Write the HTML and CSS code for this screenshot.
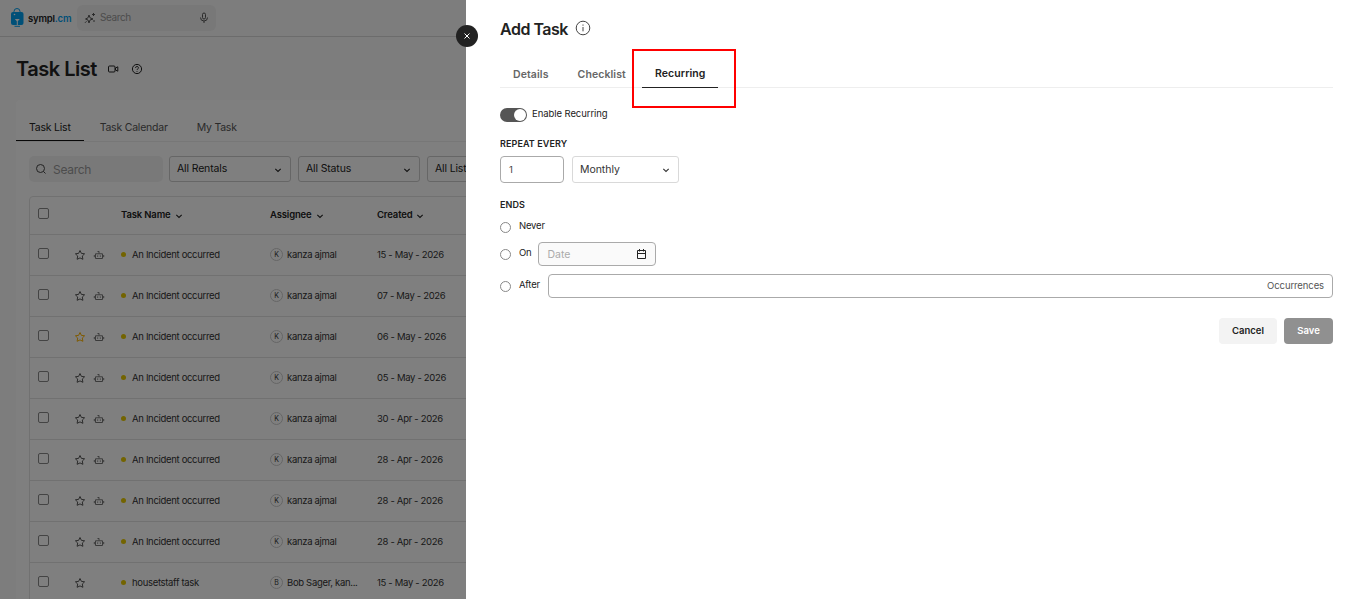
FILE: index.html
```
<!DOCTYPE html>
<html lang="en">
<head>
    <meta charset="UTF-8">
    <title>Task List</title>
    <link rel="stylesheet" href="styles.css">
</head>
<body>
<svg class="sprite">
    <symbol id="chevron" viewBox="0 0 10 10"><path d="M2.300 3.800L5 6.400l2.700-2.600"/></symbol>
    <symbol id="star" viewBox="0 0 12 12"><path d="M6 1.500l1.400 2.900 3.200.4-2.300 2.200.6 3.300L6 8.900l-2.900 1.400.6-3.300L1.400 4.800l3.200-.4z"/></symbol>
    <symbol id="robot" viewBox="0 0 12 12"><path d="M2.500 4.800h7v4.700h-7zM6 4.500V2.300M4.500 2.500H6M1.300 6v2.200M10.700 6v2.200M4.700 6.400v1.400M7.300 6.400v1.400"/></symbol>
</svg>

<div class="page">
    <div class="topbar">
        <svg class="logo-icon" viewBox="0 0 14 20">
            <path class="handle" d="M4 5V3.500a3 3 0 0 1 6 0V5"/>
            <rect x="1" y="4" width="12.500" height="13" rx="2"/>
            <path class="glass" d="M4.800 11h5L7.300 13.800zM6.800 13h1v4h-1z"/>
            <path d="M4.500 18.800h5.500v-1H4.500z"/>
            <circle class="glass" cx="4.500" cy="6.500" r=".8"/>
        </svg>
        <div class="logo-text">sympl<span>.cm</span></div>
        <div class="top-search">
            <svg class="icon" width="12" height="12" viewBox="0 0 12 12"><path d="M5 3l1 2.800L9 7 6 8 5 11 4 8 1.500 7 4 5.800zM9.500 1v3M8 2.500h3M10 8v2M1 10.800l1.500-1.500"/></svg>
            <span>Search</span>
            <svg class="icon" width="10" height="12" viewBox="0 0 10 12"><rect x="3.500" y="1" width="3" height="6" rx="1.500"/><path d="M1.500 5.500a3.500 3.500 0 0 0 7 0M5 9v2"/></svg>
        </div>
    </div>

    <div class="title">
        <h1>Task List</h1>
        <svg class="icon video" width="12" height="10" viewBox="0 0 12 10"><rect x="1.500" y="2" width="6.500" height="6" rx="1"/><path d="M8.500 4l2.300-1.200v4.400L8.500 6z"/></svg>
        <svg class="icon" width="12" height="12" viewBox="0 0 12 12"><circle cx="6" cy="6" r="4.600"/><path d="M4.600 4.900a1.400 1.400 0 1 1 2 1.200Q6 6.400 6 7M6 8v.8"/></svg>
    </div>

    <div class="card">
        <ul class="tabs">
            <li class="select">Task List</li>
            <li>Task Calendar</li>
            <li>My Task</li>
        </ul>
        <div class="filters">
            <div class="search">
                <svg class="icon" width="12" height="12" viewBox="0 0 12 12"><circle cx="5.500" cy="5.500" r="4"/><path d="M8.500 8.500l2 2"/></svg>
                <span>Search</span>
            </div>
            <div class="dropdown">All Rentals<svg class="icon chevron"><use href="#chevron"/></svg></div>
            <div class="dropdown">All Status<svg class="icon chevron"><use href="#chevron"/></svg></div>
            <div class="dropdown">All List<svg class="icon chevron"><use href="#chevron"/></svg></div>
        </div>
        <div class="table">
            <div class="row head">
                <i class="check"></i><span></span><span></span>
                <b>Task Name<svg class="icon chevron"><use href="#chevron"/></svg></b>
                <b>Assignee<svg class="icon chevron"><use href="#chevron"/></svg></b>
                <b>Created<svg class="icon chevron"><use href="#chevron"/></svg></b>
            </div>
            <div class="row">
                <i class="check"></i><svg class="icon star"><use href="#star"/></svg><svg class="icon robot"><use href="#robot"/></svg>
                <div class="name">An Incident occurred</div><div class="user"><em>K</em>kanza ajmal</div><div class="date">15 - May - 2026</div>
            </div>
            <div class="row">
                <i class="check"></i><svg class="icon star"><use href="#star"/></svg><svg class="icon robot"><use href="#robot"/></svg>
                <div class="name">An Incident occurred</div><div class="user"><em>K</em>kanza ajmal</div><div class="date">07 - May - 2026</div>
            </div>
            <div class="row">
                <i class="check"></i><svg class="icon star on"><use href="#star"/></svg><svg class="icon robot"><use href="#robot"/></svg>
                <div class="name">An Incident occurred</div><div class="user"><em>K</em>kanza ajmal</div><div class="date">06 - May - 2026</div>
            </div>
            <div class="row">
                <i class="check"></i><svg class="icon star"><use href="#star"/></svg><svg class="icon robot"><use href="#robot"/></svg>
                <div class="name">An Incident occurred</div><div class="user"><em>K</em>kanza ajmal</div><div class="date">05 - May - 2026</div>
            </div>
            <div class="row">
                <i class="check"></i><svg class="icon star"><use href="#star"/></svg><svg class="icon robot"><use href="#robot"/></svg>
                <div class="name">An Incident occurred</div><div class="user"><em>K</em>kanza ajmal</div><div class="date">30 - Apr - 2026</div>
            </div>
            <div class="row">
                <i class="check"></i><svg class="icon star"><use href="#star"/></svg><svg class="icon robot"><use href="#robot"/></svg>
                <div class="name">An Incident occurred</div><div class="user"><em>K</em>kanza ajmal</div><div class="date">28 - Apr - 2026</div>
            </div>
            <div class="row">
                <i class="check"></i><svg class="icon star"><use href="#star"/></svg><svg class="icon robot"><use href="#robot"/></svg>
                <div class="name">An Incident occurred</div><div class="user"><em>K</em>kanza ajmal</div><div class="date">28 - Apr - 2026</div>
            </div>
            <div class="row">
                <i class="check"></i><svg class="icon star"><use href="#star"/></svg><svg class="icon robot"><use href="#robot"/></svg>
                <div class="name">An Incident occurred</div><div class="user"><em>K</em>kanza ajmal</div><div class="date">28 - Apr - 2026</div>
            </div>
            <div class="row">
                <i class="check"></i><svg class="icon star"><use href="#star"/></svg><span></span>
                <div class="name">housetstaff task</div><div class="user"><em>B</em>Bob Sager, kan...</div><div class="date">15 - May - 2026</div>
            </div>
        </div>
    </div>
</div>

<div class="mask"></div>

<div class="drawer">
    <div class="close"><svg class="icon" width="8" height="8" viewBox="0 0 8 8"><path d="M1.500 1.500l5 5M6.500 1.500l-5 5"/></svg></div>
    <div class="drawer-title">
        <h2>Add Task</h2>
        <svg class="icon" width="16" height="16" viewBox="0 0 16 16"><circle cx="8" cy="8" r="6.800"/><path d="M8 7v4.300M8 4.500v1.200"/></svg>
    </div>
    <ul class="drawer-tabs">
        <li>Details</li>
        <li>Checklist</li>
        <li class="select">Recurring<div class="highlight"></div></li>
    </ul>
    <div class="switch-line"><div class="switch"></div>Enable Recurring</div>
    <h3>REPEAT EVERY</h3>
    <div class="repeat">
        <div class="number">1</div>
        <div class="dropdown">Monthly<svg class="icon chevron"><use href="#chevron"/></svg></div>
    </div>
    <h3 class="ends">ENDS</h3>
    <div class="option never"><i class="radio"></i><label>Never</label></div>
    <div class="option on"><i class="radio"></i><label>On</label>
        <div class="field date-field">Date<svg class="icon" width="11" height="12" viewBox="0 0 11 12"><path d="M1.500 2.500h8v8h-8zM1.500 5.500h8M3.500 1v2.500M7.500 1v2.500"/></svg></div>
    </div>
    <div class="option after"><i class="radio"></i><label>After</label>
        <div class="field count">Occurrences</div>
    </div>
    <div class="buttons">
        <div class="btn">Cancel</div>
        <div class="btn save">Save</div>
    </div>
</div>
</body>
</html>
```
FILE: styles.css
```
* {
    margin: 0;
    padding: 0;
    box-sizing: border-box;
}

body {
    height: 599px;
    overflow: hidden;
    font-family: Inter, "Liberation Sans", sans-serif;
    font-size: 9.5px;
    color: #222;
}

ul, li {
    list-style: none;
}

i, em {
    font-style: normal;
}

.sprite {
    display: none;
}

.icon {
    flex: none;
    fill: none;
    stroke: currentColor;
    stroke-width: 1;
}

.chevron {
    width: 10px;
    height: 10px;
    stroke-width: 1.1;
}

.page {
    height: 599px;
    overflow: hidden;
    background: #fafafa;
}

/* top bar */
.topbar {
    display: flex;
    align-items: center;
    height: 37px;
    padding-left: 10px;
    border-bottom: 1px solid #d8d8d8;
}

.logo-icon {
    width: 14px;
    height: 20px;
    margin-right: 4px;
    fill: #00a0f0;
}

.logo-icon .handle {
    fill: none;
    stroke: #00a0f0;
}

.logo-icon .glass {
    fill: #fff;
}

.logo-text {
    width: 49px;
    padding-top: 1px;
    font-size: 9.5px;
    font-weight: 600;
    letter-spacing: -0.2px;
    line-height: 16px;
    white-space: nowrap;
}

.logo-text span {
    color: #00a0f0;
}

.top-search {
    display: flex;
    align-items: center;
    width: 139px;
    height: 26px;
    padding: 0 7px;
    border-radius: 6px;
    background: #f0f0f0;
    color: #555;
}

.top-search span {
    flex: 1;
    padding: 0 0 2px 4px;
    font-size: 10px;
    letter-spacing: -0.4px;
    color: #999;
}

.title {
    display: flex;
    align-items: center;
    height: 63px;
    padding-left: 16px;
}

.title h1 {
    width: 91px;
    font-size: 20px;
    font-weight: 600;
    letter-spacing: -0.5px;
    white-space: nowrap;
}

.title .video {
    margin-right: 12px;
}

/* task list */
.card {
    width: 1334px;
    height: 520px;
    margin-left: 16px;
    border-radius: 4px;
    background: #fff;
}

.tabs {
    display: flex;
    height: 42px;
    padding-top: 14px;
    border-bottom: 1px solid #eee;
    font-size: 10.5px;
    letter-spacing: -0.22px;
    color: #555;
}

.tabs li {
    height: 27px;
    margin-right: 3px;
    padding: 7px 13px 0;
    line-height: 13px;
}

.tabs li.select {
    border-bottom: 1px solid #111;
    color: #222;
}

.filters {
    display: flex;
    padding: 14px 13px;
}

.search {
    display: flex;
    align-items: center;
    width: 134px;
    height: 26px;
    margin-right: 6px;
    padding-left: 6px;
    border-radius: 5px;
    background: #f3f3f3;
    font-size: 12px;
    letter-spacing: -0.3px;
    color: #999;
}

.search .icon {
    margin-right: 6px;
    color: #444;
}

.dropdown {
    display: flex;
    align-items: center;
    justify-content: space-between;
    width: 122px;
    height: 26px;
    margin-right: 7px;
    padding: 0 7px 1px;
    border: 1px solid #ccc;
    border-radius: 3px;
    font-size: 10.5px;
    letter-spacing: -0.15px;
}

.dropdown .chevron {
    margin-top: 2px;
}

.table {
    margin-left: 13px;
    border: 1px solid #e2e2e2;
    border-radius: 4px;
}

.row {
    display: grid;
    grid-template-columns: 36px 19px 25px 152px 107px 107px;
    align-items: center;
    height: 41px;
    padding: 0 0 2px 8px;
    border-bottom: 1px solid #e2e2e2;
    letter-spacing: -0.32px;
    color: #333;
}

.row.head {
    height: 38px;
    padding-bottom: 3px;
    letter-spacing: -0.15px;
    color: #222;
}

.row b {
    display: flex;
    align-items: center;
    font-weight: 600;
}

.row .chevron {
    margin: 3px 0 0 3px;
}

.row b:nth-child(4), .name {
    padding-left: 3px;
}

.check {
    width: 11px;
    height: 11px;
    margin-bottom: 1px;
    border: 1px solid #888;
    border-radius: 2px;
}

.star, .robot {
    width: 12px;
    height: 12px;
    margin-top: 1px;
    color: #555;
}

.star.on {
    color: #ffb400;
}

.robot {
    color: #777;
}

.name, .user {
    display: flex;
    align-items: center;
}

.name:before {
    width: 5px;
    height: 5px;
    margin: 1px 6px 0 0;
    border-radius: 50%;
    background: #e6c800;
    content: "";
}

.user em {
    width: 13px;
    height: 13px;
    margin: 1px 4px 0 0;
    border: 1px solid #ccc;
    border-radius: 50%;
    font-size: 7px;
    line-height: 11px;
    letter-spacing: 0;
    text-align: center;
}

.mask {
    position: absolute;
    top: 0;
    left: 0;
    width: 100%;
    height: 599px;
    background: rgba(0, 0, 0, .5);
}

/* drawer */
.drawer {
    position: absolute;
    top: 0;
    right: 0;
    width: 900px;
    height: 599px;
    padding: 19px 33px 0 34px;
    background: #fff;
}

.close {
    position: absolute;
    top: 25px;
    left: -10px;
    display: flex;
    align-items: center;
    justify-content: center;
    width: 22px;
    height: 22px;
    border-radius: 50%;
    background: #222;
    color: #fff;
}

.drawer-title {
    display: flex;
    height: 20px;
}

.drawer-title h2 {
    width: 75px;
    font-size: 16px;
    font-weight: 600;
    letter-spacing: -0.5px;
    line-height: 21px;
    white-space: nowrap;
}

.drawer-title .icon {
    margin-top: 1px;
    color: #444;
}

.drawer-tabs {
    display: flex;
    height: 49px;
    padding-top: 23px;
    border-bottom: 1px solid #eee;
    font-size: 10.5px;
    font-weight: 600;
    letter-spacing: 0.1px;
    line-height: 14px;
    color: #666;
}

.drawer-tabs li {
    height: 26px;
    margin-right: 3px;
    padding: 6px 13px 0;
}

.drawer-tabs li.select {
    position: relative;
    width: 76px;
    padding-top: 5px;
    border-bottom: 1px solid #222;
    color: #222;
}

.highlight {
    position: absolute;
    top: -13px;
    left: -10px;
    width: 104px;
    height: 59px;
    border: 2px solid #f00;
}

.switch-line {
    display: flex;
    height: 14px;
    margin-top: 20px;
    letter-spacing: -0.07px;
    line-height: 12px;
}

.switch {
    width: 27px;
    height: 14px;
    margin-right: 5px;
    padding: 1px 1px 1px 14px;
    border-radius: 7px;
    background: #555;
}

.switch:before {
    display: block;
    width: 12px;
    height: 12px;
    border-radius: 50%;
    background: #fff;
    content: "";
}

.drawer h3 {
    height: 12px;
    margin-top: 16px;
    font-size: 9px;
    font-weight: 600;
    letter-spacing: 0.1px;
    line-height: 12px;
}

.repeat {
    display: flex;
    margin-top: 6px;
}

.number {
    width: 64px;
    height: 27px;
    margin-right: 8px;
    padding-left: 8px;
    border: 1px solid #aaa;
    border-radius: 4px;
    line-height: 26px;
    color: #444;
}

.repeat .dropdown {
    width: 107px;
    height: 27px;
    border-color: #d9d9d9;
    letter-spacing: -0.05px;
    color: #333;
}

.option {
    display: flex;
    align-items: center;
    height: 24px;
}

.option.never {
    margin-top: 4px;
}

.option.on {
    margin-top: 3px;
}

.option.after {
    margin-top: 8px;
}

.radio {
    width: 11px;
    height: 11px;
    margin-right: 8px;
    border: 1px solid #888;
    border-radius: 50%;
}

.option label {
    margin-bottom: 3px;
    letter-spacing: -0.2px;
}

.field {
    display: flex;
    align-items: center;
    height: 24px;
    border: 1px solid #aaa;
    border-radius: 4px;
}

.date-field {
    justify-content: space-between;
    width: 118px;
    margin-left: 7px;
    padding: 0 8px;
    background: #fafafa;
    font-size: 10.5px;
    color: #aaa;
}

.date-field .icon {
    color: #222;
}

.count {
    flex: 1;
    justify-content: flex-end;
    margin-left: 8px;
    padding: 0 8px 2px;
    letter-spacing: -0.1px;
    color: #555;
}

.buttons {
    display: flex;
    justify-content: flex-end;
    margin-top: 20px;
}

.btn {
    width: 58px;
    height: 26px;
    border-radius: 4px;
    background: #f3f3f3;
    font-weight: 600;
    line-height: 26px;
    text-align: center;
}

.btn.save {
    width: 49px;
    margin-left: 7px;
    background: #909090;
    color: #fff;
}
```
